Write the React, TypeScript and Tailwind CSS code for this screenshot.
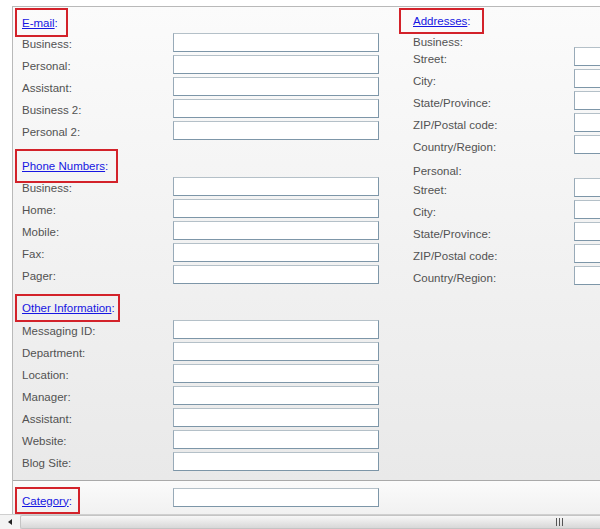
import clsx from 'clsx'

const emailRows = ['Business:', 'Personal:', 'Assistant:', 'Business 2:', 'Personal 2:']
const phoneRows = ['Business:', 'Home:', 'Mobile:', 'Fax:', 'Pager:']
const otherRows = [
  'Messaging ID:',
  'Department:',
  'Location:',
  'Manager:',
  'Assistant:',
  'Website:',
  'Blog Site:',
]
const addressRows = ['Street:', 'City:', 'State/Province:', 'ZIP/Postal code:', 'Country/Region:']

function Heading({ label, className }: { label: string; className?: string }) {
  return (
    <div
      className={clsx(
        'flex shrink-0 items-center border-2 border-[#d3222a] pl-[5px] leading-[14px]',
        className
      )}
    >
      <a href="#" className="text-[#1616e2] underline underline-offset-[1px]">
        {label}
      </a>
      <span className="text-[#1616e2]">:</span>
    </div>
  )
}

function TextBox({ className }: { className?: string }) {
  return (
    <div
      className={clsx(
        'h-[19px] shrink-0 border border-[#98aab8] border-t-[#b4c0c8] border-r-[#7d96a8] border-b-[#7d96a8] bg-white',
        className
      )}
    />
  )
}

function LeftRow({ label }: { label: string }) {
  return (
    <div className="flex h-[22px] items-start">
      <div className="w-[160px] shrink-0 pl-[9px] pt-[4px] leading-[14px] whitespace-nowrap">
        {label}
      </div>
      <TextBox className="w-[206px]" />
    </div>
  )
}

function RightRow({ label }: { label: string }) {
  return (
    <div className="flex h-[22px] items-start">
      <div className="w-[175px] shrink-0 pl-[14px] pt-[5px] leading-[14px] whitespace-nowrap">
        {label}
      </div>
      <TextBox className="w-[206px]" />
    </div>
  )
}

export default function App() {
  return (
    <div className="flex h-[529px] w-[600px] flex-col overflow-hidden bg-white font-['Liberation_Sans',Arial,sans-serif] text-[11.5px] text-[#525252]">
      <div className="flex flex-1 flex-col pl-[12px] pt-[6px]">
        <div className="flex w-[800px] flex-1 flex-col border-l border-t border-[#b9b9b9]">
          <div className="flex h-[474px] border-b border-[#a9a9a9] bg-gradient-to-b from-[#fbfbfb] to-[#e9e9e9]">
            {/* left column */}
            <div className="flex w-[386px] shrink-0 flex-col">
              <Heading label="E-mail" className="mb-[-4px] ml-[2px] mt-[1px] h-[29px] w-[53px]" />
              {emailRows.map((r) => (
                <LeftRow key={'e' + r} label={r} />
              ))}
              <Heading
                label="Phone Numbers"
                className="mb-[-6px] ml-[2px] mt-[6px] h-[34px] w-[103px]"
              />
              {phoneRows.map((r) => (
                <LeftRow key={'p' + r} label={r} />
              ))}
              <Heading
                label="Other Information"
                className="mb-[-2px] ml-[2px] mt-[7px] h-[28px] w-[105px]"
              />
              {otherRows.map((r) => (
                <LeftRow key={'o' + r} label={r} />
              ))}
            </div>

            {/* right column */}
            <div className="flex shrink-0 flex-col">
              <Heading label="Addresses" className="mb-[-1px] mt-[1px] h-[26px] w-[85px] pl-[12px]" />
              <div className="h-[14px] pl-[14px] pt-[2px] leading-[14px]">Business:</div>
              {addressRows.map((r) => (
                <RightRow key={'b' + r} label={r} />
              ))}
              <div className="h-[21px] pl-[14px] pt-[7px] leading-[14px]">Personal:</div>
              {addressRows.map((r) => (
                <RightRow key={'h' + r} label={r} />
              ))}
            </div>
          </div>

          {/* category */}
          <div className="flex flex-1 items-start bg-gradient-to-b from-[#fbfbfb] to-[#f1f1f1]">
            <Heading label="Category" className="ml-[2px] mt-[6px] h-[27px] w-[65px]" />
            <TextBox className="ml-[93px] mt-[7px] w-[206px]" />
          </div>
        </div>
      </div>

      {/* horizontal scrollbar */}
      <div className="flex h-[15px] border-t border-[#cfcfcf] bg-[#f3f3f3]">
        <div className="flex w-[20px] shrink-0 items-center justify-center">
          <div className="h-0 w-0 border-y-[3.5px] border-r-[4px] border-y-transparent border-r-[#222]" />
        </div>
        <div className="flex flex-1 items-center justify-end rounded-l-[2px] border border-r-0 border-[#c4c4c4] bg-gradient-to-b from-[#f7f7f7] to-[#d8d8d8] pr-[37px]">
          <div className="flex h-[8px] gap-[2px]">
            <div className="w-[1px] bg-[#555]" />
            <div className="w-[1px] bg-[#555]" />
            <div className="w-[1px] bg-[#555]" />
          </div>
        </div>
      </div>
    </div>
  )
}
